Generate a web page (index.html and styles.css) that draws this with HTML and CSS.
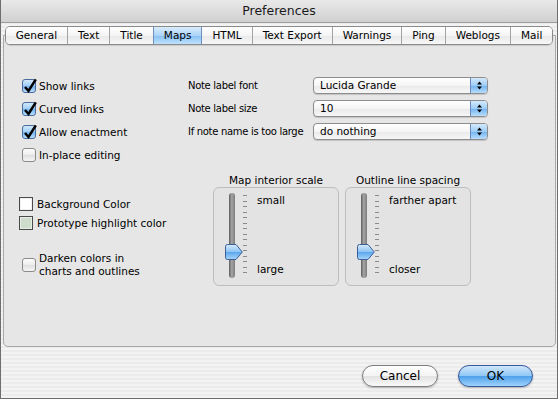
FILE: index.html
```html
<!DOCTYPE html>
<html>
<head>
<meta charset="utf-8">
<link rel="stylesheet" href="styles.css">
</head>
<body>
<div class="window">
  <div class="titlebar">Preferences</div>
  <div class="tabs">
    <div class="tab">General</div>
    <div class="tab">Text</div>
    <div class="tab">Title</div>
    <div class="tab active">Maps</div>
    <div class="tab">HTML</div>
    <div class="tab">Text Export</div>
    <div class="tab">Warnings</div>
    <div class="tab">Ping</div>
    <div class="tab">Weblogs</div>
    <div class="tab">Mail</div>
  </div>
  <div class="panel">
    <div class="top">
      <div class="checks">
        <div class="row"><span class="cb on"><svg viewBox="0 0 14 14"><path d="M3 8 L6.5 12 L13.8 0.3"/></svg></span><span class="lbl">Show links</span></div>
        <div class="row"><span class="cb on"><svg viewBox="0 0 14 14"><path d="M3 8 L6.5 12 L13.8 0.3"/></svg></span><span class="lbl">Curved links</span></div>
        <div class="row"><span class="cb on"><svg viewBox="0 0 14 14"><path d="M3 8 L6.5 12 L13.8 0.3"/></svg></span><span class="lbl">Allow enactment</span></div>
        <div class="row"><span class="cb"></span><span class="lbl">In-place editing</span></div>
      </div>
      <div class="fields">
        <div class="row"><span class="flabel">Note label font</span><div class="popup"><span class="ptext">Lucida Grande</span><span class="cap"><svg viewBox="0 0 5 9"><path d="M0 3.5 L2.5 0.5 L5 3.5Z M0 5.5 L2.5 8.5 L5 5.5Z"/></svg></span></div></div>
        <div class="row"><span class="flabel">Note label size</span><div class="popup"><span class="ptext">10</span><span class="cap"><svg viewBox="0 0 5 9"><path d="M0 3.5 L2.5 0.5 L5 3.5Z M0 5.5 L2.5 8.5 L5 5.5Z"/></svg></span></div></div>
        <div class="row"><span class="flabel">If note name is too large</span><div class="popup"><span class="ptext">do nothing</span><span class="cap"><svg viewBox="0 0 5 9"><path d="M0 3.5 L2.5 0.5 L5 3.5Z M0 5.5 L2.5 8.5 L5 5.5Z"/></svg></span></div></div>
      </div>
    </div>
    <div class="bottom">
      <div class="colors">
        <div class="wellrow"><span class="well white"></span><span class="wlbl">Background Color</span></div>
        <div class="wellrow"><span class="well green"></span><span class="wlbl">Prototype highlight color</span></div>
        <div class="darken"><span class="cb"></span><span class="lbl dlbl">Darken colors in<br>charts and outlines</span></div>
      </div>
      <div class="sgroup">
        <div class="slabel">Map interior scale</div>
        <div class="sbox">
          <div class="track"><svg class="thumb" viewBox="0 0 18 16"><defs><linearGradient id="tg1" x1="0" y1="0" x2="0" y2="1"><stop offset="0" stop-color="#d6ebfd"/><stop offset="0.5" stop-color="#8cc3f3"/><stop offset="0.51" stop-color="#5aa6ec"/><stop offset="1" stop-color="#a9d6fb"/></linearGradient></defs><path d="M2.5 0.5 H11 L17.3 8 L11 15.5 H2.5 Q0.5 15.5 0.5 13.5 V2.5 Q0.5 0.5 2.5 0.5Z" fill="url(#tg1)" stroke="#3e5f95"/></svg></div>
          <div class="ticks"></div>
          <div class="slabels"><span>small</span><span>large</span></div>
        </div>
      </div>
      <div class="sgroup">
        <div class="slabel">Outline line spacing</div>
        <div class="sbox">
          <div class="track"><svg class="thumb" viewBox="0 0 18 16"><defs><linearGradient id="tg2" x1="0" y1="0" x2="0" y2="1"><stop offset="0" stop-color="#d6ebfd"/><stop offset="0.5" stop-color="#8cc3f3"/><stop offset="0.51" stop-color="#5aa6ec"/><stop offset="1" stop-color="#a9d6fb"/></linearGradient></defs><path d="M2.5 0.5 H11 L17.3 8 L11 15.5 H2.5 Q0.5 15.5 0.5 13.5 V2.5 Q0.5 0.5 2.5 0.5Z" fill="url(#tg2)" stroke="#3e5f95"/></svg></div>
          <div class="ticks"></div>
          <div class="slabels"><span>farther apart</span><span>closer</span></div>
        </div>
      </div>
    </div>
  </div>
  <div class="buttons">
    <div class="btn cancel">Cancel</div>
    <div class="btn ok">OK</div>
  </div>
</div>
</body>
</html>
```

FILE: styles.css
```css
* { box-sizing: border-box; }
html, body { margin: 0; padding: 0; }
body {
  width: 558px;
  height: 399px;
  overflow: hidden;
  font-family: "DejaVu Sans", "Liberation Sans", sans-serif;
  font-size: 10.5px;
  color: #000;
  background: #6b6b6b;
}
.window {
  width: 558px;
  height: 399px;
  border: 1px solid #6e6e6e;
  border-top: 0;
  display: flex;
  flex-direction: column;
  background: repeating-linear-gradient(to bottom, #f3f3f3 0 2px, #ebebeb 2px 4px);
}
.titlebar {
  flex: none;
  height: 23px;
  border-bottom: 1px solid #9c9c9c;
  background: linear-gradient(#e9e9e9, #d0d0d0);
  font-size: 12.5px;
  line-height: 22px;
  text-align: center;
  color: #1a1a1a;
}
.tabs {
  flex: none;
  align-self: center;
  display: flex;
  margin-top: 3px;
  height: 19px;
  border: 1px solid #8a8a8a;
  border-radius: 5px;
  overflow: hidden;
  position: relative;
  z-index: 1;
  box-shadow: 0 1px 1px rgba(0,0,0,0.12);
}
.tab {
  padding: 0 10px;
  line-height: 17px;
  background: linear-gradient(#ffffff, #f4f4f4 50%, #e8e8e8 51%, #f7f7f7);
  border-left: 1px solid #a3a3a3;
  white-space: nowrap;
}
.tab:first-child { border-left: 0; }
.tab.active {
  background: linear-gradient(#d9ecfc, #acd4f8 50%, #86c0f4 51%, #bfe2fd);
  border-left-color: #6d8fc0;
}
.tab.active + .tab { border-left-color: #6d8fc0; }
.panel {
  flex: none;
  margin: -10px 1px 0 2px;
  height: 312px;
  border: 1px solid #a8a8a8;
  border-radius: 0 0 5px 5px;
  background: #e6e6e6;
  padding-top: 38px;
}
.top {
  display: flex;
  padding-left: 18px;
}
.checks { width: 166px; }
.row {
  height: 23px;
  display: flex;
  align-items: center;
}
.cb {
  flex: none;
  position: relative;
  width: 14px;
  height: 14px;
  border: 1px solid #8a8a8a;
  border-radius: 3px;
  background: linear-gradient(#fdfdfd, #ececec 50%, #dedede 51%, #f6f6f6);
}
.cb.on {
  border-color: #4a6a9c;
  background: linear-gradient(#d3e9fc, #9dcdf6 50%, #6fb2ef 51%, #b9defc);
}
.cb svg {
  position: absolute;
  left: -1px;
  top: -1px;
  width: 14px;
  height: 14px;
  overflow: visible;
}
.cb svg path {
  fill: none;
  stroke: #000;
  stroke-width: 2.5;
  stroke-linejoin: miter;
}
.lbl { margin-left: 3px; white-space: nowrap; }
.flabel {
  width: 125px;
  flex: none;
  white-space: nowrap;
  font-size: 10px;
  letter-spacing: -0.3px;
}
.popup {
  width: 175px;
  height: 17px;
  display: flex;
  border: 1px solid #8c8c8c;
  border-radius: 4px;
  overflow: hidden;
  background: linear-gradient(#ffffff, #f5f5f5 50%, #e9e9e9 51%, #f7f7f7);
  box-shadow: 0 1px 1px rgba(0,0,0,0.15);
}
.ptext {
  flex: 1;
  padding-left: 6px;
  line-height: 15px;
}
.cap {
  flex: none;
  width: 17px;
  border-left: 1px solid #6a88bb;
  background: linear-gradient(#d3e9fc, #9dcdf6 50%, #6fb2ef 51%, #b9defc);
  display: flex;
  align-items: center;
  justify-content: center;
}
.cap svg { width: 5px; height: 9px; }
.cap svg path { fill: #000; }
.bottom {
  display: flex;
  padding-left: 15px;
  margin-top: 7px;
}
.colors {
  width: 194px;
  flex: none;
  padding-top: 24px;
}
.wellrow {
  display: flex;
  align-items: center;
  height: 14px;
  margin-bottom: 5px;
}
.well {
  flex: none;
  width: 14px;
  height: 14px;
  border: 1px solid #4a4a4a;
  box-shadow: inset 0 0 0 1px #f0f0f0;
}
.well.white { background: #ffffff; }
.well.green { background: #cddccb; box-shadow: inset 0 0 0 1px #e6eee5; }
.wlbl { margin-left: 4px; white-space: nowrap; }
.darken {
  display: flex;
  align-items: center;
  margin-top: 22px;
  padding-left: 3px;
}
.dlbl { line-height: 13px; }
.sgroup {
  width: 126px;
  flex: none;
  margin-right: 6px;
}
.slabel {
  text-align: center;
  line-height: 14px;
  white-space: nowrap;
}
.sbox {
  height: 99px;
  border: 1px solid #bdbdbd;
  border-radius: 6px;
  background: #e3e3e3;
  display: flex;
  align-items: flex-start;
  padding: 5px 0 0 15px;
}
.track {
  position: relative;
  flex: none;
  width: 6px;
  height: 85px;
  border-radius: 3px;
  background: linear-gradient(to right, #5d5d5d, #a5a5a5 45%, #7c7c7c);
}
.thumb {
  position: absolute;
  left: -4px;
  top: 51px;
  width: 18px;
  height: 16px;
}
.ticks {
  flex: none;
  margin-left: 8px;
  margin-top: 2px;
  width: 4px;
  height: 78px;
  background: repeating-linear-gradient(to bottom, #8a8a8a 0 1px, transparent 1px 5.5px);
}
.slabels {
  margin-left: 10px;
  margin-top: 1px;
  height: 82px;
  display: flex;
  flex-direction: column;
  justify-content: space-between;
  line-height: 13px;
  white-space: nowrap;
}
.buttons {
  display: flex;
  justify-content: flex-end;
  gap: 20px;
  margin-top: 18px;
  padding-right: 24px;
}
.btn {
  width: 76px;
  height: 22px;
  border-radius: 11px;
  font-size: 12px;
  line-height: 20px;
  text-align: center;
  box-shadow: 0 1px 2px rgba(0,0,0,0.25);
}
.cancel {
  border: 1px solid #7c7c7c;
  background: linear-gradient(#ffffff, #f3f3f3 50%, #e2e2e2 51%, #f9f9f9);
}
.ok {
  width: 75px;
  border: 1px solid #35599a;
  background: linear-gradient(#d0e7fb, #8ec6f4 50%, #4da0ea 51%, #9fd3fb);
}
```
